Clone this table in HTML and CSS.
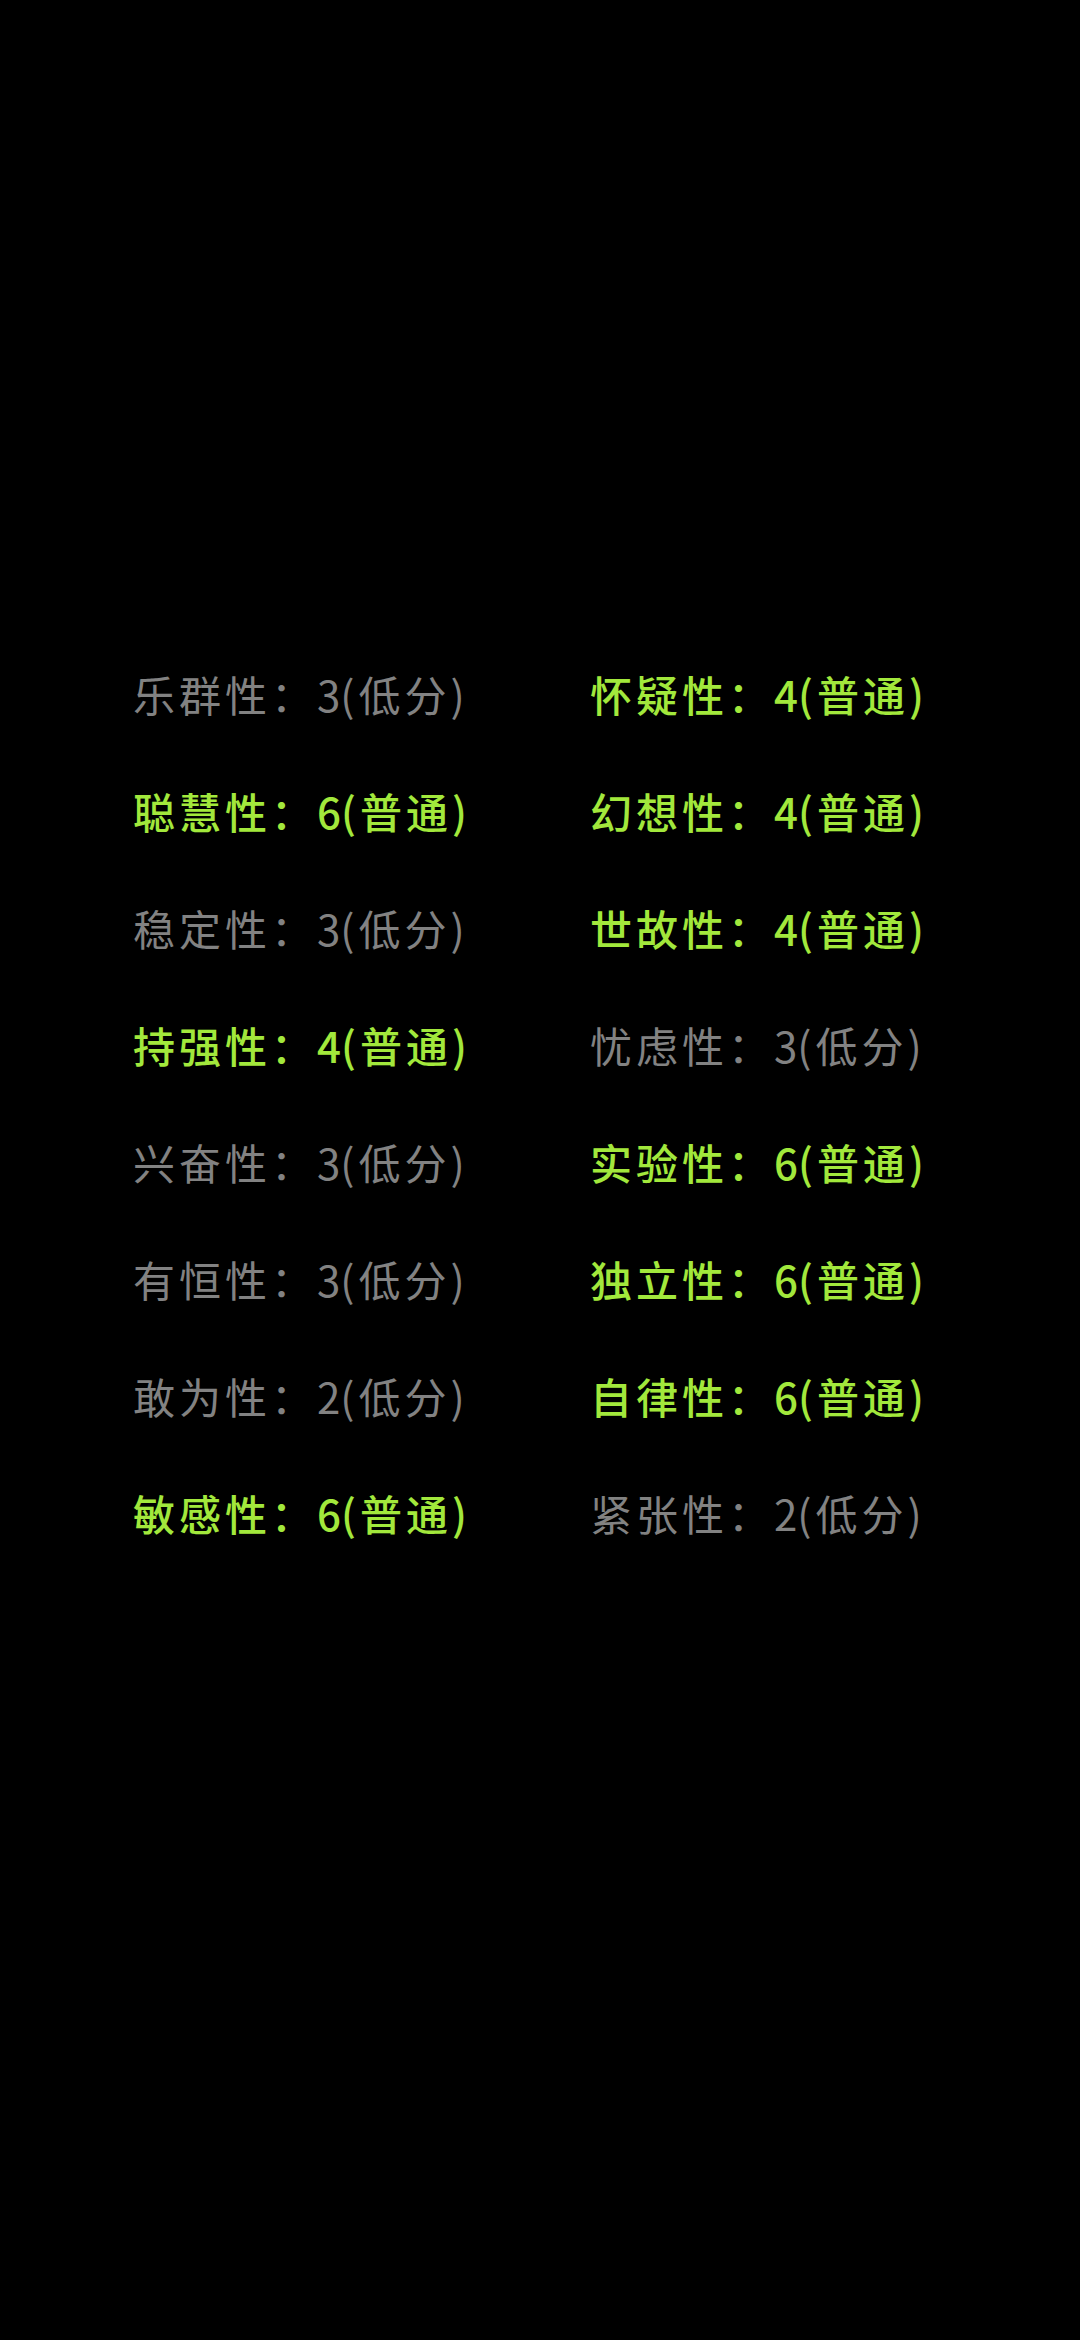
FILE: index.html
```html
<!DOCTYPE html>
<html lang="zh-CN">
<head>
	<meta charset="UTF-8">
	<title>16PF</title>
	<link rel="stylesheet" href="styles.css">
</head>
<body>
<div class="wrapper">
	<div class="grid">
		<p class="item low">乐群性：<span class="num">3(</span>低分)</p>
		<p class="item mid">怀疑性：<span class="num">4(</span>普通)</p>
		<p class="item mid">聪慧性：<span class="num">6(</span>普通)</p>
		<p class="item mid">幻想性：<span class="num">4(</span>普通)</p>
		<p class="item low">稳定性：<span class="num">3(</span>低分)</p>
		<p class="item mid">世故性：<span class="num">4(</span>普通)</p>
		<p class="item mid">持强性：<span class="num">4(</span>普通)</p>
		<p class="item low">忧虑性：<span class="num">3(</span>低分)</p>
		<p class="item low">兴奋性：<span class="num">3(</span>低分)</p>
		<p class="item mid">实验性：<span class="num">6(</span>普通)</p>
		<p class="item low">有恒性：<span class="num">3(</span>低分)</p>
		<p class="item mid">独立性：<span class="num">6(</span>普通)</p>
		<p class="item low">敢为性：<span class="num">2(</span>低分)</p>
		<p class="item mid">自律性：<span class="num">6(</span>普通)</p>
		<p class="item mid">敏感性：<span class="num">6(</span>普通)</p>
		<p class="item low">紧张性：<span class="num">2(</span>低分)</p>
	</div>
</div>
</body>
</html>
```

FILE: styles.css
```css
* {
	margin: 0;
	padding: 0;
}

body {
	background-color: #000;
	width: 1080px;
	height: 2340px;
	font-family: "Noto Sans CJK SC", "Noto Sans", sans-serif;
}

.wrapper {
	padding-top: 635px;
	padding-left: 133px;
}

.grid {
	display: grid;
	grid-template-columns: 457px 457px;
	grid-auto-rows: 117px;
}

.item {
	font-size: 42px;
	line-height: 117px;
	letter-spacing: 4px;
	white-space: nowrap;
}

.num {
	letter-spacing: 0;
	margin-right: 4px;
}

.low {
	color: #828282;
	font-weight: 400;
}

.mid {
	color: #a2e83c;
	font-weight: 500;
}
```
